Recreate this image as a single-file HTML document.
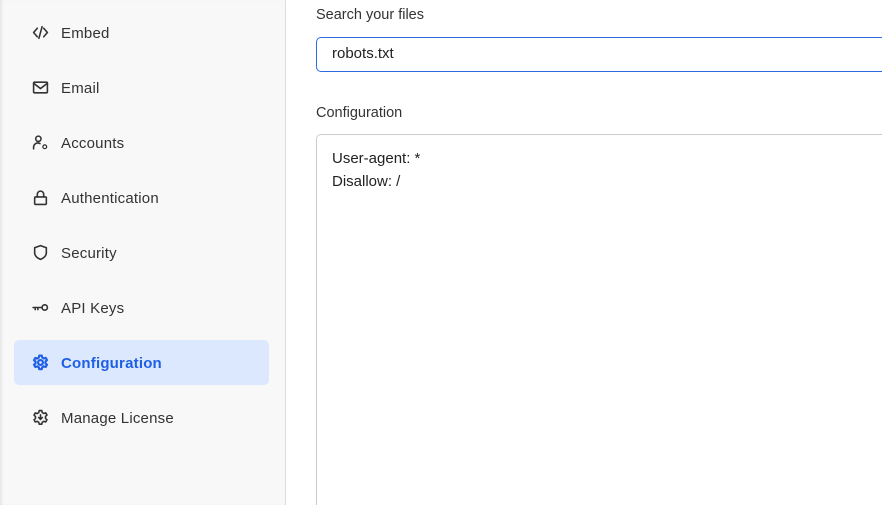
<!DOCTYPE html>
<html><head><meta charset="utf-8"><style>
*{margin:0;padding:0;box-sizing:border-box}
html,body{width:882px;height:505px;overflow:hidden}
body{background:#fff;font-family:"Liberation Sans",sans-serif;color:#333;position:relative}
.side{position:absolute;left:0;top:0;width:286px;height:505px;background:#f8f8f8;border-right:1px solid #ddd;box-shadow:inset 3px 0 3px -2px #ddd}
.item{position:absolute;left:14px;width:255px;height:45px;border-radius:5px;font-size:15px;color:#333}
.item svg{position:absolute;left:18px;top:14px;width:17px;height:17px;fill:none;stroke:#333;stroke-width:1.5;stroke-linecap:round;stroke-linejoin:round}
.item span{position:absolute;left:47px;top:15px;letter-spacing:.2px}
.active{background:#dbe8fd;color:#1f5fe6;font-weight:bold}
.active svg{stroke:#1f5fe6;stroke-width:2}
.lbl{position:absolute;left:316px;font-size:14.5px;color:#333}
.inp{position:absolute;left:316px;top:37px;width:566px;height:35px;border:1px solid #2a6be0;border-right:none;border-radius:5px 0 0 5px;font-size:15px;padding:7px 0 0 15px;color:#222}
.ta{position:absolute;left:316px;top:134px;width:566px;height:371px;border:1px solid #ccc;border-right:none;border-bottom:none;border-radius:5px 0 0 0;font-size:15px;padding:12px 0 0 15px;line-height:23px;color:#222}
</style></head><body>
<div class="side">
<div class="item" style="top:10px"><svg viewBox="0 0 16 16"><path d="M5 4L1.5 8 5 12M11 4l3.5 4-3.5 4M9.5 2.5l-3 11"/></svg><span>Embed</span></div>
<div class="item" style="top:65px"><svg viewBox="0 0 16 16"><rect x="1.5" y="3" width="13" height="10" rx="1"/><path d="M1.5 4l6.5 5 6.5-5"/></svg><span>Email</span></div>
<div class="item" style="top:120px"><svg viewBox="0 0 16 16"><circle cx="6" cy="4.5" r="2.5"/><path d="M1.5 14v-1.5a4 4 0 0 1 6-3.5"/><circle cx="12" cy="12" r="1.8" stroke-width="1.2"/></svg><span>Accounts</span></div>
<div class="item" style="top:175px"><svg viewBox="0 0 16 16"><rect x="2.5" y="7.5" width="11" height="7" rx="1"/><path d="M5 7.5V5a3 3 0 0 1 6 0v2.5"/></svg><span>Authentication</span></div>
<div class="item" style="top:230px"><svg viewBox="0 0 16 16"><path d="M8 1.5l5.5 2v4.5c0 3.5-3 5.5-5.5 6.5C5.5 13.5 2.5 11.5 2.5 8V3.5z"/></svg><span>Security</span></div>
<div class="item" style="top:285px"><svg viewBox="0 0 16 16"><circle cx="12" cy="8" r="2.5"/><path d="M1 8h8.5M3 8v2M5.5 8v2"/></svg><span>API Keys</span></div>
<div class="item active" style="top:340px"><svg viewBox="0 0 16 16"><circle cx="8" cy="8" r="2.3"/><path d="M6.8 1.5h2.4l.4 1.8 1.5.9 1.8-.6 1.2 2.1-1.4 1.3v1.9l1.4 1.2-1.2 2.1-1.8-.6-1.5.9-.4 1.8H6.8l-.4-1.8-1.5-.9-1.8.6-1.2-2.1 1.4-1.2V7.1L1.9 5.8l1.2-2.1 1.8.6 1.5-.9z"/></svg><span>Configuration</span></div>
<div class="item" style="top:395px"><svg viewBox="0 0 16 16"><path d="M6.8 1.5h2.4l.4 1.8 1.5.9 1.8-.6 1.2 2.1-1.4 1.3v1.9l1.4 1.2-1.2 2.1-1.8-.6-1.5.9-.4 1.8H6.8l-.4-1.8-1.5-.9-1.8.6-1.2-2.1 1.4-1.2V7.1L1.9 5.8l1.2-2.1 1.8.6 1.5-.9z"/><path d="M8 5.5v4M6.3 8L8 9.8 9.7 8"/></svg><span>Manage License</span></div>
</div>
<div class="lbl" style="top:7px">Search your files</div>
<div class="inp">robots.txt</div>
<div class="lbl" style="top:105px">Configuration</div>
<div class="ta">User-agent: *<br>Disallow: /</div>
</body></html>
